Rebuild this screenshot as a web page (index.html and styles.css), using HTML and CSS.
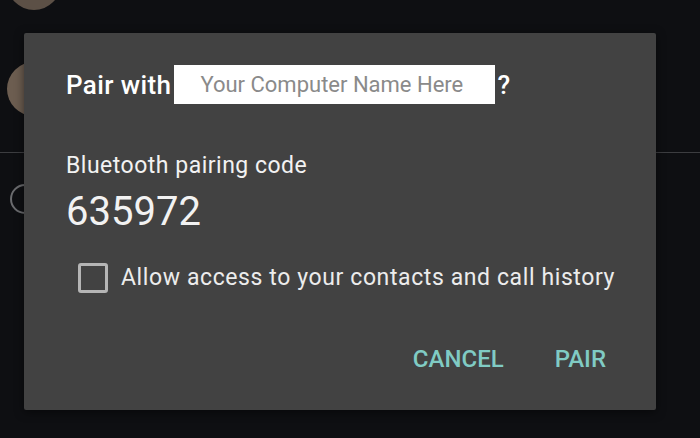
FILE: index.html
```html
<!DOCTYPE html>
<html>
	<head>
		<meta charset="UTF-8">
		<title>Bluetooth pairing request</title>
		<link rel="stylesheet" href="styles.css">
	</head>
	<body>
		<div class="screen">
			<!-- list behind the dialog -->
			<div class="list">
				<div class="row">
					<div class="avatar"></div>
				</div>
				<div class="row row-device">
					<div class="avatar avatar-light">
						<svg width="30" height="30" viewBox="0 0 30 30">
							<path d="M9 7 V20 H21 V7 Z M6 21 H24 V23 H6 Z" fill="none" stroke="#5a4222" stroke-width="2"/>
						</svg>
					</div>
				</div>
				<div class="divider"></div>
				<div class="row row-radio">
					<div class="radio"></div>
				</div>
			</div>

			<!-- pairing dialog -->
			<div class="dialog">
				<div class="title">
					<span>Pair with</span>
					<span class="name-box">Your Computer Name Here</span>
					<span>?</span>
				</div>
				<div class="label">Bluetooth pairing code</div>
				<div class="code">635972</div>
				<label class="check-row">
					<span class="checkbox"></span>
					<span>Allow access to your contacts and call history</span>
				</label>
				<div class="actions">
					<span class="btn">CANCEL</span>
					<span class="btn">PAIR</span>
				</div>
			</div>
		</div>
	</body>
</html>
```
FILE: styles.css
```css
* {
	margin: 0;
	padding: 0;
	box-sizing: border-box;
}
body {
	background: #0e0f12;
	font-family: Roboto, "Liberation Sans", sans-serif;
	overflow: hidden;
}
.screen {
	position: relative;
	width: 700px;
	height: 438px;
	overflow: hidden;
}
/* 背景列表 */
.list {
	margin-top: -44px;
}
.row {
	padding-left: 7px;
}
.row-device {
	margin-top: 52px;
}
.avatar {
	width: 54px;
	height: 54px;
	border-radius: 50%;
	background: #5c5046;
}
.avatar-light {
	background: #6c5d50;
	display: flex;
	align-items: center;
	justify-content: center;
}
.divider {
	margin-top: 36px;
	height: 1px;
	background: #3c3d40;
}
.row-radio {
	margin-top: 31px;
	padding-left: 10px;
}
.radio {
	width: 30px;
	height: 30px;
	border-radius: 50%;
	border: 2px solid #6a6b6e;
}
/* 对话框 */
.dialog {
	position: absolute;
	left: 24px;
	top: 33px;
	width: 632px;
	height: 377px;
	background: #424242;
	border-radius: 2px;
	box-shadow: 0 2px 10px rgba(0, 0, 0, 0.5);
	padding: 32px 50px 0 42px;
	color: #f2f2f2;
}
.title {
	display: flex;
	align-items: center;
	font-size: 26px;
	font-weight: 500;
	letter-spacing: 0.4px;
	color: #fff;
}
.name-box {
	width: 321px;
	height: 39px;
	margin: 0 2px 0 3px;
	background: #fff;
	color: #8a8a8a;
	font-size: 22px;
	font-weight: 400;
	letter-spacing: 0;
	display: flex;
	align-items: center;
	padding-left: 26px;
}
.label {
	margin-top: 49px;
	font-size: 23px;
	line-height: 25px;
	letter-spacing: 0.5px;
}
.code {
	margin-top: 10px;
	font-size: 40px;
	line-height: 48px;
}
.check-row {
	margin-top: 27px;
	display: flex;
	align-items: center;
	gap: 13px;
	padding-left: 12px;
	font-size: 23px;
	line-height: 26px;
	letter-spacing: 0.6px;
	white-space: nowrap;
	color: #ececec;
}
.checkbox {
	width: 30px;
	height: 30px;
	flex-shrink: 0;
	border: 3px solid #b5b5b5;
	border-radius: 3px;
}
.actions {
	margin-top: 52px;
	display: flex;
	justify-content: flex-end;
	gap: 51px;
}
.btn {
	font-size: 24px;
	line-height: 28px;
	font-weight: 500;
	color: #80cbc4;
}
```
